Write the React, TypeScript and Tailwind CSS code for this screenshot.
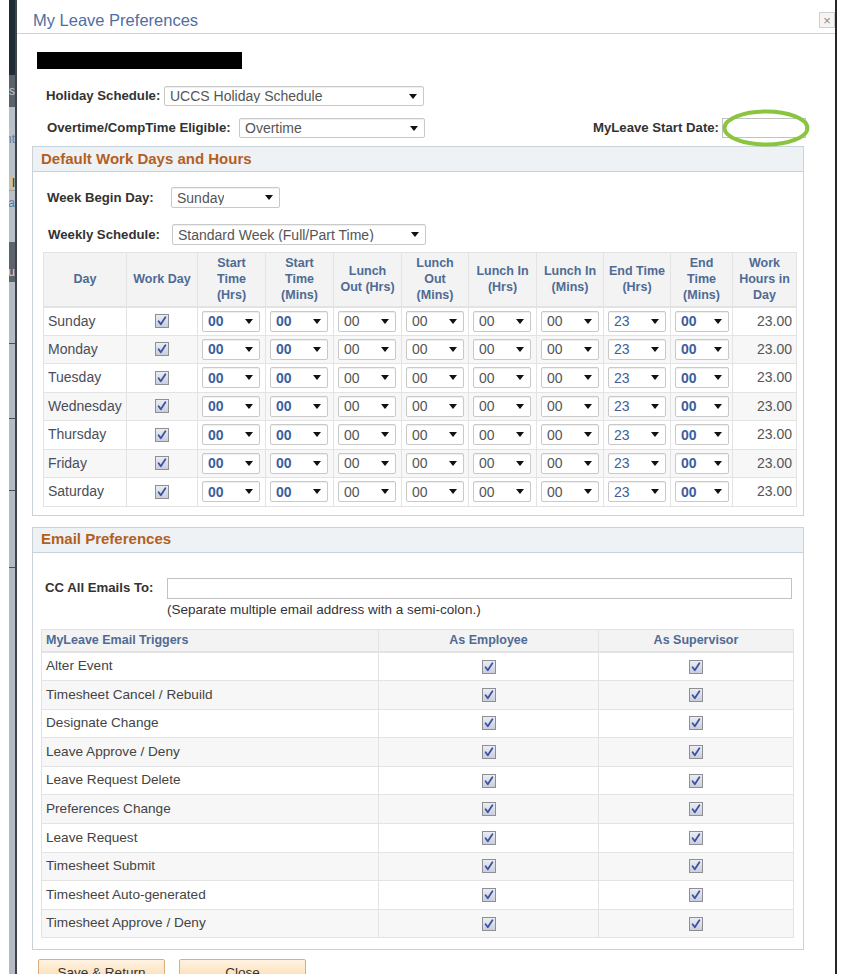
import React from "react";

type Tone = "plain" | "blue" | "bold";

const DAYS = ["Sunday", "Monday", "Tuesday", "Wednesday", "Thursday", "Friday", "Saturday"];

const TRIGGERS = [
  "Alter Event",
  "Timesheet Cancel / Rebuild",
  "Designate Change",
  "Leave Approve / Deny",
  "Leave Request Delete",
  "Preferences Change",
  "Leave Request",
  "Timesheet Submit",
  "Timesheet Auto-generated",
  "Timesheet Approve / Deny",
];

const HEADS: string[][] = [
  ["Day"],
  ["Work Day"],
  ["Start", "Time", "(Hrs)"],
  ["Start", "Time", "(Mins)"],
  ["Lunch", "Out (Hrs)"],
  ["Lunch", "Out", "(Mins)"],
  ["Lunch In", "(Hrs)"],
  ["Lunch In", "(Mins)"],
  ["End Time", "(Hrs)"],
  ["End", "Time", "(Mins)"],
  ["Work", "Hours in", "Day"],
];

const COL_W = [83, 71, 68, 68, 68, 67, 68, 67, 67, 62, 64];

// per-day dropdowns: value + how the value is drawn
const SLOTS: { v: string; tone: Tone }[] = [
  { v: "00", tone: "bold" },
  { v: "00", tone: "bold" },
  { v: "00", tone: "plain" },
  { v: "00", tone: "plain" },
  { v: "00", tone: "plain" },
  { v: "00", tone: "plain" },
  { v: "23", tone: "blue" },
  { v: "00", tone: "bold" },
];

const TONES: Record<Tone, string> = {
  plain: "text-[#555]",
  blue:  "text-[#3c5e9e]",
  bold:  "font-bold text-[#3c5e9e]",
};

function Arrow() {
  return <span className="h-0 w-0 shrink-0 border-x-[4.5px] border-t-[5px] border-x-transparent border-t-[#111]" />;
}

function Dropdown({ value, w, tone = "plain", h = "h-[21px]" }: { value: string; w: string; tone?: Tone; h?: string }) {
  return (
    <div className={`flex ${h} ${w} items-center justify-between rounded-[2px] border border-[#c9c9c9] bg-white pl-[5px] pr-[6px] text-[14px] shadow-[inset_0_1px_1px_rgba(0,0,0,0.07)] ${TONES[tone]}`}>
      <span className="truncate leading-none">{value}</span>
      <Arrow />
    </div>
  );
}

function Check() {
  return (
    <svg width="14" height="14" viewBox="0 0 14 14" className="mx-auto block">
      <defs>
        <linearGradient id="cbg" x1="0" y1="0" x2="0" y2="1">
          <stop offset="0" stopColor="#eceef3" />
          <stop offset="1" stopColor="#c9cdd8" />
        </linearGradient>
      </defs>
      <rect x="0.5" y="0.5" width="13" height="13" fill="url(#cbg)" stroke="#8d8f94" />
      <path d="M3.6 7.2 L5.8 10.2 L10.4 3.2" fill="none" stroke="#3a52a6" strokeWidth="1.8" strokeLinecap="round" strokeLinejoin="round" />
    </svg>
  );
}

function SectionHead({ title }: { title: string }) {
  return (
    <div className="flex h-[25px] items-center border-b border-[#c9d1d9] bg-[#eff2f4] pl-[8px] text-[15px] font-bold text-[#b3601f]">
      {title}
    </div>
  );
}

// background page peeking out on the far left
function SideStrip() {
  return (
    <div className="flex w-[8px] shrink-0 flex-col overflow-hidden border-r-2 border-[#3e444a] text-[12px] leading-none">
      <div className="h-[75px] bg-[#1f2b36]" />
      <div className="flex h-[32px] items-center justify-end bg-[#5a636c] text-[#c8ccd2]">s</div>
      <div className="flex h-[69px] items-start justify-end bg-[#b9c0c8] pt-[26px] text-[#5b7ba3]">nt</div>
      <div className="flex h-[14px] items-center justify-end bg-[#cabfa6] text-[#222]">l</div>
      <div className="flex h-[52px] items-start justify-end border-t border-[#98a0a8] bg-[#b9c0c8] pt-[6px] text-[#5b7ba3]">a</div>
      <div className="flex h-[40px] items-end justify-end bg-[#5d646c] pb-[4px] text-[#d5d8dc]">u</div>
      <div className="h-[61px] bg-[#b4bbc3]" />
      <div className="h-[75px] border-t border-[#4a5057] bg-[#b4bbc3]" />
      <div className="h-[72px] border-t border-[#4a5057] bg-[#b4bbc3]" />
      <div className="h-[77px] border-t border-[#4a5057] bg-[#b4bbc3]" />
      <div className="flex-1 border-t border-[#4a5057] bg-[#b4bbc3]" />
    </div>
  );
}

export default function App() {
  return (
    <div className="flex h-[974px] w-[841px] overflow-hidden bg-white font-['Liberation_Sans',Arial,sans-serif] text-[#333]">
      <div className="w-[9px] shrink-0" />
      <SideStrip />

      {/* ── Modal ── */}
      <div className="w-[818px] shrink-0">
        <div className="flex h-[34px] items-start justify-between border-b border-[#d2d2d2]">
          <h1 className="pl-[16px] pt-[11px] text-[16.5px] leading-[19px] text-[#4f6ea3]">My Leave Preferences</h1>
          <div className="mt-[12px] flex h-[16px] w-[16px] items-center justify-center border border-[#cfcfcf] bg-[#f5f5f5] text-[13px] leading-none text-[#8a8a8a]">
            ×
          </div>
        </div>

        {/* redacted name */}
        <div className="ml-[20px] mt-[18px] h-[17px] w-[205px] bg-black" />

        <div className="ml-[29px] mt-[17px] flex items-center">
          <span className="w-[118px] text-[13.2px] font-bold">Holiday Schedule:</span>
          <Dropdown value="UCCS Holiday Schedule" w="w-[260px]" h="h-[20px]" />
        </div>

        <div className="ml-[30px] mr-[29px] mt-[12px] flex items-center">
          <span className="w-[192px] text-[13.2px] font-bold">Overtime/CompTime Eligible:</span>
          <Dropdown value="Overtime" w="w-[186px]" h="h-[20px]" />
          <span className="ml-auto text-[13.2px] font-bold">MyLeave Start Date:</span>
          <div className="relative ml-[3px]">
            <div className="h-[20px] w-[84px] border border-[#c2c2c2] bg-white" />
            <svg width="88" height="38" viewBox="0 0 88 38" className="absolute -top-[9px] left-0">
              <ellipse cx="44" cy="19" rx="41.5" ry="16.5" fill="none" stroke="#8bc53f" strokeWidth="4" />
            </svg>
          </div>
        </div>

        {/* ── Default Work Days and Hours ── */}
        <div className="ml-[15px] mt-[8px] w-[772px] border border-[#c9d1d9] pb-[8px]">
          <SectionHead title="Default Work Days and Hours" />

          <div className="ml-[14px] mt-[15px] flex items-center">
            <span className="w-[124px] text-[13.2px] font-bold">Week Begin Day:</span>
            <Dropdown value="Sunday" w="w-[109px]" />
          </div>
          <div className="ml-[15px] mt-[16px] flex items-center">
            <span className="w-[124px] text-[13.2px] font-bold">Weekly Schedule:</span>
            <Dropdown value="Standard Week (Full/Part Time)" w="w-[254px]" />
          </div>

          <table className="ml-[10px] mt-[7px] w-[753px] table-fixed border-collapse">
            <colgroup>
              {COL_W.map((w, i) => (
                <col key={i} style={{ width: w }} />
              ))}
            </colgroup>
            <thead>
              <tr className="h-[54px] bg-[#f3f3f3]">
                {HEADS.map((lines, i) => (
                  <th key={i} className="border border-b-2 border-[#e3e3e3] px-[2px] text-center align-middle text-[12.5px] font-bold leading-[16px] text-[#4f6b95]">
                    {lines.map(l => (
                      <div key={l}>{l}</div>
                    ))}
                  </th>
                ))}
              </tr>
            </thead>
            <tbody>
              {DAYS.map((d, r) => (
                <tr key={d} className={`h-[28.5px] ${r % 2 ? "bg-[#f7f7f7]" : "bg-white"}`}>
                  <td className="border border-[#e3e3e3] pl-[4px] text-[14px] text-[#4a4e58]">{d}</td>
                  <td className="border border-[#e3e3e3]"><Check /></td>
                  {SLOTS.map((s, i) => (
                    <td key={i} className="border border-[#e3e3e3] pl-[4px]">
                      <Dropdown value={s.v} tone={s.tone} w={i === 7 ? "w-[54px]" : "w-[58px]"} />
                    </td>
                  ))}
                  <td className="border border-[#e3e3e3] pr-[4px] text-right text-[14px] text-[#555]">23.00</td>
                </tr>
              ))}
            </tbody>
          </table>
        </div>

        {/* ── Email Preferences ── */}
        <div className="ml-[15px] mt-[11px] w-[772px] border border-[#c9d1d9] pb-[11px]">
          <SectionHead title="Email Preferences" />

          <div className="ml-[12px] mt-[25px] flex items-center">
            <span className="w-[122px] text-[13.2px] font-bold">CC All Emails To:</span>
            <div className="h-[21px] w-[625px] border border-[#c2c2c2] bg-white" />
          </div>
          <p className="ml-[134px] mt-[2px] text-[13.5px] leading-[18px] text-[#333]">
            (Separate multiple email address with a semi-colon.)
          </p>

          <table className="ml-[8px] mt-[10px] w-[752px] table-fixed border-collapse">
            <colgroup>
              <col style={{ width: 337 }} />
              <col style={{ width: 220 }} />
              <col style={{ width: 195 }} />
            </colgroup>
            <thead>
              <tr className="h-[23px] bg-[#f3f3f3] text-[12.5px] font-bold text-[#4f6b95]">
                <th className="border border-b-2 border-[#e3e3e3] pl-[4px] text-left">MyLeave Email Triggers</th>
                <th className="border border-b-2 border-[#e3e3e3] text-center">As Employee</th>
                <th className="border border-b-2 border-[#e3e3e3] text-center">As Supervisor</th>
              </tr>
            </thead>
            <tbody>
              {TRIGGERS.map((t, r) => (
                <tr key={t} className={`h-[28.6px] ${r % 2 ? "bg-[#f7f7f7]" : "bg-white"}`}>
                  <td className="border border-[#e3e3e3] pl-[4px] text-[13.6px] text-[#444]">{t}</td>
                  <td className="border border-[#e3e3e3]"><Check /></td>
                  <td className="border border-[#e3e3e3]"><Check /></td>
                </tr>
              ))}
            </tbody>
          </table>
        </div>

        {/* ── Actions ── */}
        <div className="ml-[21px] mt-[9px] flex gap-[14px]">
          {["Save & Return", "Close"].map(b => (
            <button
              key={b}
              className="h-[24px] w-[127px] rounded-[2px] border border-[#dcae7a] bg-gradient-to-b from-[#fff3e2] to-[#fcd9ab] pt-[2px] text-[13.5px] leading-none text-[#333]"
            >
              {b}
            </button>
          ))}
        </div>
      </div>

      <div className="w-[2px] shrink-0 bg-[#262626]" />
      <div className="flex-1" />
    </div>
  );
}
